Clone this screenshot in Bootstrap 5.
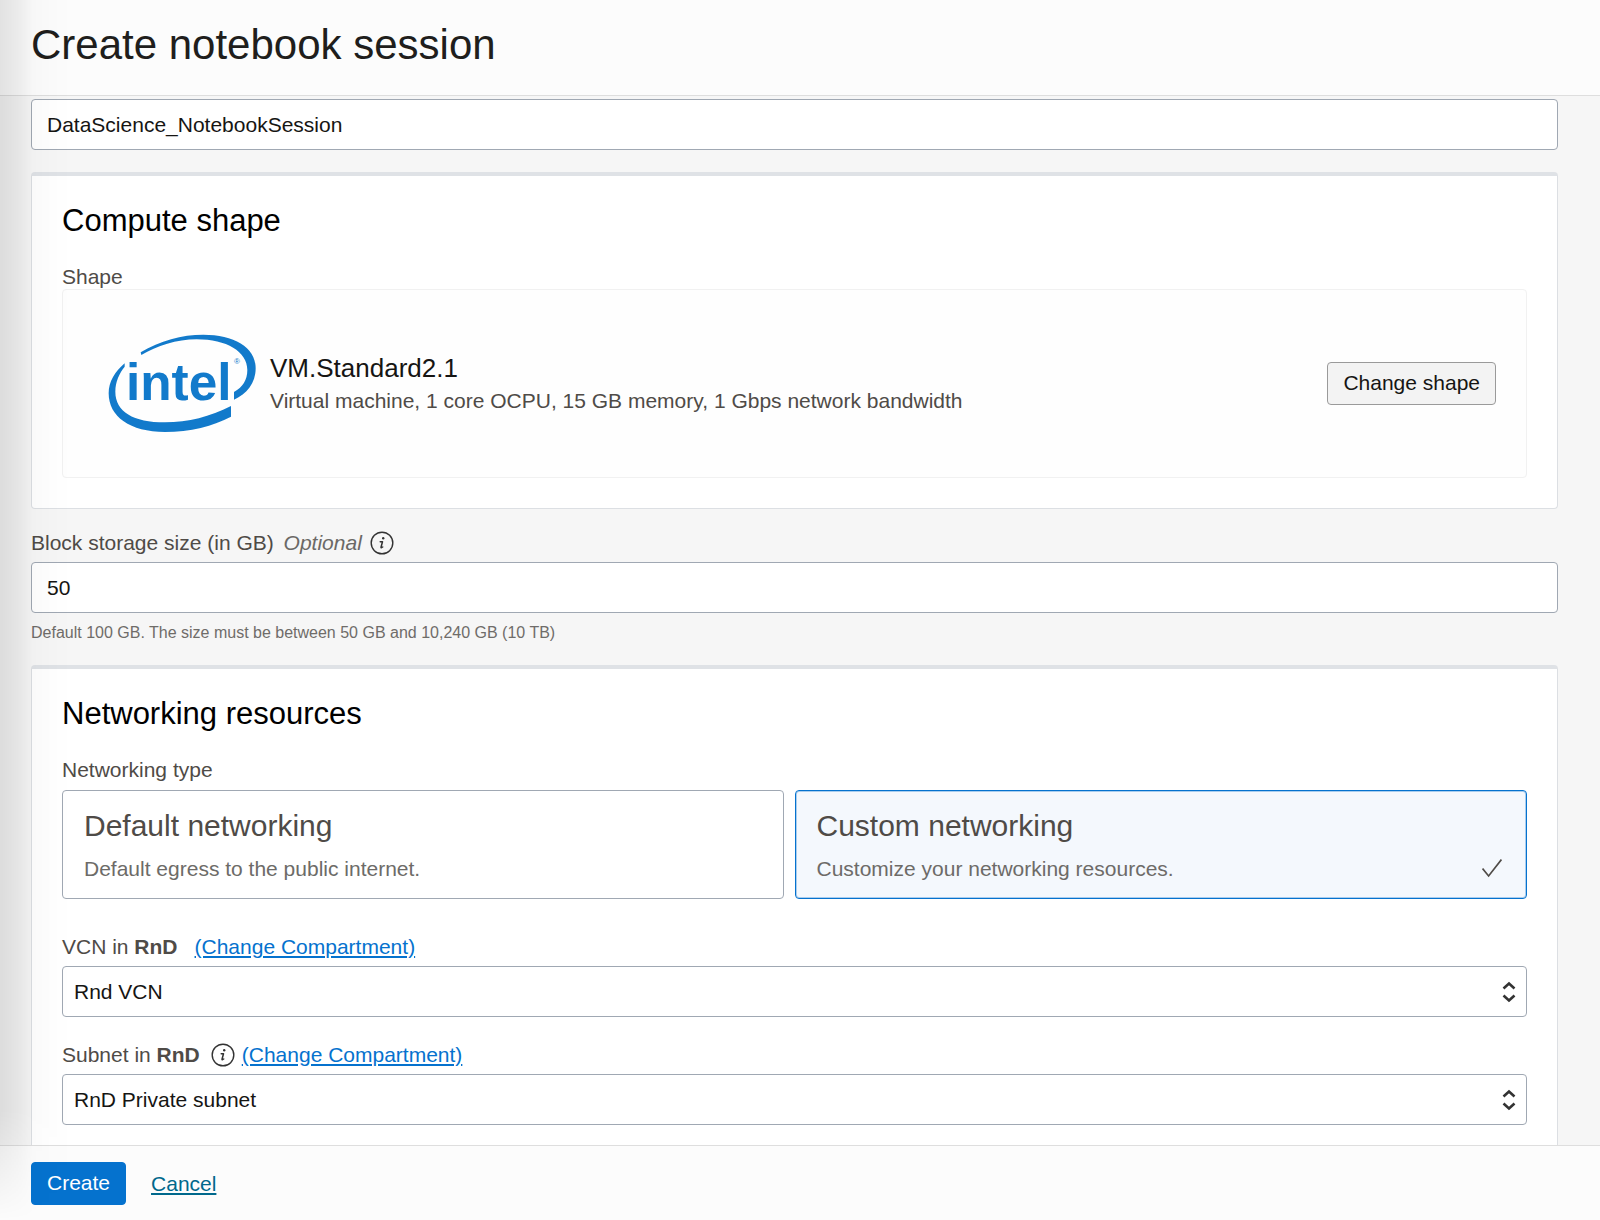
<!DOCTYPE html>
<html lang="en">
<head>
<meta charset="utf-8">
<meta name="viewport" content="width=device-width, initial-scale=1">
<title>Create notebook session</title>
<link href="https://cdn.jsdelivr.net/npm/bootstrap@5.3.0/dist/css/bootstrap.min.css" rel="stylesheet">
<style>
  body {
    font-family: "Liberation Sans", Arial, sans-serif;
    font-size: 21px;
    line-height: 24px;
    color: #4f4b47;
    background: #f6f6f6;
  }
  .panel-head, .panel-foot { background: #fcfcfc; }
  .panel-head { padding: 20px 42px 25px 31px; border-bottom: 1px solid #dedede; }
  .panel-head h1 { font-size: 42px; line-height: 50px; color: #201e1c; font-weight: 400; }
  .panel-main { padding: 3px 42px 22px 31px; min-height: 0; overflow-y: auto; scrollbar-width: none; }
  .panel-foot { padding: 16px 42px 15px 31px; border-top: 1px solid #dedede; gap: 25px; }

  /* soft shadow cast by the page that the panel slides over */
  .edge-shade {
    width: 72px;
    pointer-events: none;
    background: linear-gradient(90deg, rgba(0,0,0,.1), rgba(0,0,0,.065) 24%, rgba(0,0,0,.02) 46%, rgba(0,0,0,.006) 72%, transparent);
    -webkit-mask-image: linear-gradient(0deg, transparent, #000 110px);
    mask-image: linear-gradient(0deg, transparent, #000 110px);
  }

  .form-control, .form-select {
    height: 51px;
    font-size: 21px;
    line-height: 24px;
    color: #161513;
    border: 1px solid #a0a8b3;
    border-radius: 4px;
    background-color: #fff;
  }
  .form-control { padding: 0 15px; }
  .form-select {
    padding: 0 40px 0 11px;
    background-image: url("data:image/svg+xml,%3Csvg xmlns='http://www.w3.org/2000/svg' viewBox='0 0 14 24' fill='none' stroke='%23333' stroke-width='2.6'%3E%3Cpath d='M1.500 8.500 7 3.500l5.500 5M1.500 15.500 7 20.500l5.500-5'/%3E%3C/svg%3E");
    background-size: 14px 24px;
    background-position: right 10px center;
  }
  .field-label { line-height: 24px; margin: 0; }
  .label-row { margin-bottom: 7px; }
  .optional-tag { color: #6b6966; margin-left: 4px; }
  .help-note { font-size: 16px; line-height: 21px; color: #6f6c69; margin-top: 9px; }
  .vcn-row { margin-top: 36px; gap: 17px; }
  .subnet-row { margin-top: 26px; gap: 7px; }
  .subnet-row svg { margin-left: 4px; }

  .section-card {
    background: #fff;
    border: 1px solid #dcdfe3;
    border-top: 4px solid #dfe2e6;
    border-radius: 4px;
    padding: 25px 30px 30px;
    margin: 22px 0;
  }
  .section-card h2 { font-size: 31px; line-height: 40px; font-weight: 400; color: #000; margin-bottom: 24px; }
  .shape-box { border: 1px solid #f1f1f1; border-radius: 4px; padding: 44px 30px 45px 45px; background: #fefefe; }
  .shape-text { margin-left: 14px; }
  .shape-name { font-size: 26px; line-height: 36px; color: #161513; }
  .shape-info { line-height: 30px; }

  .btn { --bs-btn-font-size: 21px; --bs-btn-line-height: 24px; --bs-btn-border-radius: 4px; height: 43px; padding: 0 15px 1px; }
  .btn-shape { color: #161513; background: #f3f3f3; border-color: #9a9a9a; }
  .btn-create { color: #fff; background: #0572ce; border-color: #0572ce; }
  .link-change { color: #0572ce; }
  .link-cancel { color: #00688c; }

  .option-tile {
    border: 1px solid #a0a8b3;
    border-radius: 4px;
    padding: 17px 24px 15px 21px;
    background: #fff;
    cursor: pointer;
  }
  .option-title { font-size: 30px; line-height: 36px; margin-bottom: 11px; }
  .option-text { line-height: 28px; color: #6d6b68; }
  .option-tile svg { display: none; }
  .btn-check:checked + .option-tile { border-color: #0572ce; background: #f4f8fd; box-shadow: inset 0 0 0 1px #a9cdee; }
  .btn-check:checked + .option-tile svg { display: block; }
  .tile-gap { padding-right: 11px; }
</style>
<script src="https://cdn.jsdelivr.net/npm/bootstrap@5.3.0/dist/js/bootstrap.bundle.min.js"></script>
</head>
<body>
<svg class="d-none" aria-hidden="true">
  <symbol id="info" viewBox="0 0 24 24">
    <circle cx="12" cy="12" r="10.800" fill="none" stroke="#333" stroke-width="1.400"/>
    <circle cx="13.200" cy="7.200" r="1.200" fill="#333"/>
    <path d="M10.200 10.700h2.300l-1.500 5.600c0 .6.600.5 1.700-.3" fill="none" stroke="#333" stroke-width="1.500" stroke-linejoin="round" stroke-linecap="round"/>
  </symbol>
</svg>

<form class="d-flex flex-column vh-100 position-relative">
  <header class="panel-head">
    <h1 class="m-0">Create notebook session</h1>
  </header>

  <main class="panel-main flex-fill">
    <input class="form-control" id="session-name" type="text" aria-label="Name" value="DataScience_NotebookSession">

    <section class="section-card">
      <h2>Compute shape</h2>
      <div class="field-label">Shape</div>
      <div class="shape-box d-flex align-items-center">
        <svg width="148" height="98" viewBox="54 42 444 294" fill="#127acb" class="flex-shrink-0" role="img" aria-label="Intel">
          <path d="M152 97C210 62 275 44 340 44C430 44 497 80 497 145C497 190 470 222 432 239V216C458 202 472 180 472 150C472 95 410 58 320 58C260 58 200 78 154 105Z"/>
          <path d="M104 130C75 155 56 185 56 220C56 290 120 336 225 336C300 336 370 318 423 290V258C360 290 295 307 225 307C130 307 76 275 76 215C76 185 88 160 104 140Z"/>
          <text x="108" y="240" font-family="'Liberation Sans', sans-serif" font-weight="700" font-size="154">intel</text>
          <text x="432" y="131" font-family="'Liberation Sans', sans-serif" font-size="24">®</text>
        </svg>
        <div class="flex-fill shape-text">
          <div class="shape-name">VM.Standard2.1</div>
          <div class="shape-info">Virtual machine, 1 core OCPU, 15 GB memory, 1 Gbps network bandwidth</div>
        </div>
        <button class="btn btn-shape flex-shrink-0" type="button">Change shape</button>
      </div>
    </section>

    <div class="d-flex align-items-center label-row">
      <label class="field-label" for="storage">Block storage size (in GB) <em class="optional-tag">Optional</em></label>
      <svg class="ms-2" width="24" height="24" role="img" aria-label="Information"><use href="#info" width="24" height="24"/></svg>
    </div>
    <input class="form-control" id="storage" type="text" inputmode="numeric" value="50" aria-describedby="storage-help">
    <div class="help-note" id="storage-help">Default 100 GB. The size must be between 50 GB and 10,240 GB (10 TB)</div>

    <section class="section-card">
      <h2>Networking resources</h2>
      <div class="field-label mb-2" id="net-type">Networking type</div>
      <div class="row g-0" role="radiogroup" aria-labelledby="net-type">
        <div class="col-6 tile-gap">
          <input class="btn-check" type="radio" name="net" id="net-default">
          <label class="option-tile d-block" for="net-default">
            <span class="option-title d-block">Default networking</span>
            <span class="option-text d-block">Default egress to the public internet.</span>
          </label>
        </div>
        <div class="col-6">
          <input class="btn-check" type="radio" name="net" id="net-custom" checked>
          <label class="option-tile d-block" for="net-custom">
            <span class="option-title d-block">Custom networking</span>
            <span class="option-text d-flex justify-content-between">Customize your networking resources.
              <svg width="20" height="24" viewBox="0 0 20 24" fill="none" stroke="#4f4b47" stroke-width="1.600"><path d="M.6 13.600 6.600 21 19.400 4.600"/></svg>
            </span>
          </label>
        </div>
      </div>

      <div class="d-flex label-row vcn-row">
        <label class="field-label" for="vcn">VCN in <b>RnD</b></label>
        <a class="link-change" href="#">(Change Compartment)</a>
      </div>
      <select class="form-select" id="vcn"><option>Rnd VCN</option></select>

      <div class="d-flex align-items-center label-row subnet-row">
        <label class="field-label" for="subnet">Subnet in <b>RnD</b></label>
        <svg width="24" height="24" role="img" aria-label="Information"><use href="#info" width="24" height="24"/></svg>
        <a class="link-change" href="#">(Change Compartment)</a>
      </div>
      <select class="form-select" id="subnet"><option>RnD Private subnet</option></select>
    </section>
  </main>

  <footer class="panel-foot d-flex align-items-center">
    <button class="btn btn-create" type="submit">Create</button>
    <a class="link-cancel" href="#">Cancel</a>
  </footer>
  <div class="edge-shade position-absolute top-0 bottom-0 start-0"></div>
</form>
</body>
</html>
